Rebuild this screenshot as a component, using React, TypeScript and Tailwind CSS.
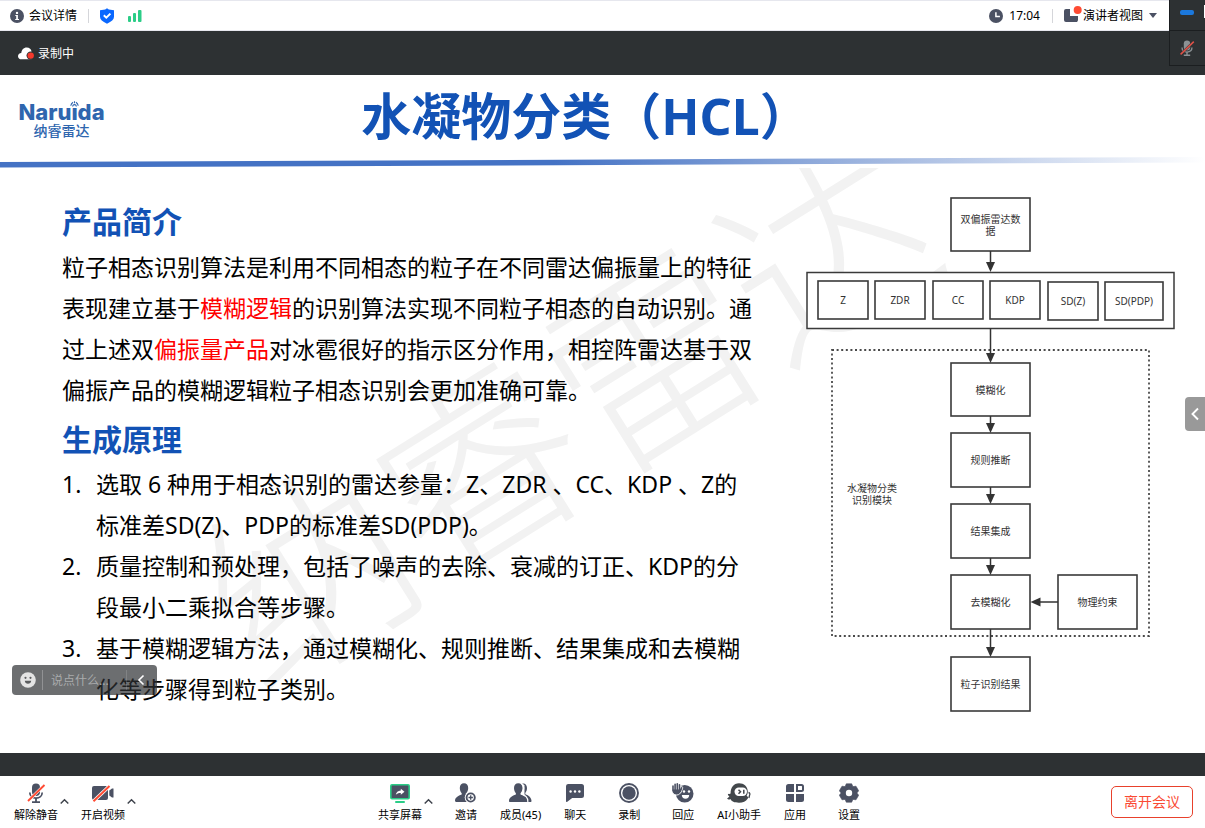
import type { ReactNode } from "react";

const INK = "#4b5163";
const RED = "#ff4b33";

function InfoIcon() {
  return (
    <svg width="14" height="14" viewBox="0 0 14 14" aria-hidden="true">
      <circle cx="7" cy="7" r="7" fill={INK} />
      <circle cx="7" cy="3.9" r="1.2" fill="#fff" />
      <path d="M5.3 5.9h2.6v4H9v1.2H5.2V9.9h1V7.1h-.9z" fill="#fff" />
    </svg>
  );
}

function ShieldIcon() {
  return (
    <svg width="14" height="16" viewBox="0 0 14 16" aria-hidden="true">
      <path d="M7 .3l1.800 1.200L14 2.200v6.600c0 2.800-2.400 4.900-7 6.900-4.600-2-7-4.100-7-6.900V2.200l5.200-.7z" fill="#0a68ff" />
      <path d="M3.800 7.300l2.500 2.400 4.100-4.100" fill="none" stroke="#fff" strokeWidth="2" />
    </svg>
  );
}

function SignalIcon() {
  return (
    <svg width="14" height="12" viewBox="0 0 14 12" fill="#2bcd87" aria-hidden="true">
      <rect x="0" y="6" width="3" height="6" rx="1" />
      <rect x="5" y="3" width="3" height="9" rx="1" />
      <rect x="10" y="0" width="3.500" height="12" rx="1" />
    </svg>
  );
}

function ClockIcon() {
  return (
    <svg width="14" height="14" viewBox="0 0 14 14" aria-hidden="true">
      <circle cx="7" cy="7" r="7" fill={INK} />
      <path d="M6.900 3.200v4.300h4" fill="none" stroke="#fff" strokeWidth="1.500" />
    </svg>
  );
}

function ViewIcon() {
  return (
    <svg width="18" height="17" viewBox="0 0 18 17" aria-hidden="true">
      <path d="M2 3h4v7h7v6H2a2 2 0 0 1-2-2V5a2 2 0 0 1 2-2z" fill={INK} />
      <path d="M6 10h8v4a2 2 0 0 1-2 2H6z" fill={INK} />
      <path d="M7.500 3v5.500H14" fill="none" stroke="#fff" strokeWidth="1.200" />
      <circle cx="13.700" cy="4" r="4" fill={RED} />
    </svg>
  );
}

function CloudIcon() {
  return (
    <svg width="16" height="13" viewBox="0 0 16 13" aria-hidden="true">
      <path d="M3.500 12.300C1.500 12.300 0 11.200 0 9.200c0-1.900 1.400-3.100 3.300-3.200C3.500 2.800 5.600.4 8.700.4c2.700 0 4.800 1.700 4.800 4.500v7.400z" fill="#fff" />
      <circle cx="12.700" cy="8.600" r="4.200" fill="#2d3133" />
      <circle cx="12.700" cy="8.600" r="3.200" fill="#f5392d" />
    </svg>
  );
}

function MicShape({ color, backing, slash }: { color: string; backing: string; slash: string }) {
  return (
    <>
      <rect x="6" y="0.500" width="8" height="12.500" rx="4" fill={color} />
      <path d="M3.800 9.500c0 3.500 2.700 5.600 6.200 5.600s6.200-2.100 6.200-5.600" fill="none" stroke={color} strokeWidth="1.700" />
      <path d="M10 15v4M6 19.100h8" stroke={color} strokeWidth="1.800" fill="none" />
      <path d="M2 18L18.500 2" stroke={backing} strokeWidth="3" />
      <path d="M2 18L18.500 2" stroke={slash} strokeWidth="1.900" />
    </>
  );
}

function MicOffIcon() {
  return (
    <svg width="20" height="20" viewBox="0 0 20 20" aria-hidden="true">
      <MicShape color={INK} backing="#fff" slash={RED} />
    </svg>
  );
}

function CameraOffIcon() {
  return (
    <svg width="22" height="20" viewBox="0 0 22 20" aria-hidden="true">
      <rect x="0" y="3" width="16" height="14" rx="2" fill={INK} />
      <path d="M17.300 7.500l2.700-2h1.500v9H20l-2.700-2z" fill={INK} />
      <path d="M1.500 18.200L17.500 3" stroke="#fff" strokeWidth="3.600" />
      <path d="M1.500 18.200L17.500 3" stroke={RED} strokeWidth="2" />
    </svg>
  );
}

function ShareIcon() {
  return (
    <svg width="20" height="20" viewBox="0 0 20 20" aria-hidden="true">
      <rect x="0.800" y="1.800" width="18.400" height="14" rx="1.200" fill={INK} stroke="#2bcd87" strokeWidth="1.600" />
      <rect x="5" y="18" width="10" height="2" rx="1" fill="#2bcd87" />
      <path d="M10.800 5.800l3.700 3-3.700 3v-1.900c-2.100-.1-3.600.4-5 1.900.3-2.600 2.100-4.200 5-4.400z" fill="#fff" />
    </svg>
  );
}

function InviteIcon() {
  return (
    <svg width="22" height="20" viewBox="0 0 22 20" aria-hidden="true">
      <path d="M9 .2c2.600 0 4.200 1.900 4.200 4.700 0 2.200-.8 4.200-2 5.300v1.300c1.300.6 2.300.9 3.200 1.500v6H1.200c-.7 0-1.200-.5-1.200-1.200 0-3.300 3.100-5 6.700-6.300v-1.300C5.600 9.100 4.800 7.100 4.800 4.900 4.800 2.100 6.400.2 9 .2z" fill={INK} />
      <circle cx="15.700" cy="14.500" r="6" fill="#fff" />
      <circle cx="15.700" cy="14.500" r="4.100" fill="none" stroke={INK} strokeWidth="1.900" />
      <path d="M15.700 12.300v4.400M13.500 14.500h4.400" stroke={INK} strokeWidth="1.300" />
    </svg>
  );
}

function MembersIcon() {
  return (
    <svg width="23" height="20" viewBox="0 0 23 20" aria-hidden="true">
      <path d="M13 .7c2.800-.9 5 1.100 5 4.400 0 2-.6 3.700-1.700 4.800v1.400c3.400 1.300 6.200 3.300 6.200 6.700 0 .6-.4 1-1 1h-6V2z" fill={INK} />
      <path d="M9.300.2c2.600 0 4.200 1.900 4.200 4.700 0 2.200-.8 4.200-2 5.300v1.300c3.600 1.200 6.500 3 6.500 6.500 0 .6-.4 1-1 1H1c-.6 0-1-.4-1-1 0-3.500 3.300-5.300 6.900-6.500v-1.300C5.800 9.100 5 7.100 5 4.900 5 2.100 6.700.2 9.300.2z" fill={INK} />
      <path d="M12.200.3c1.700 1 2.500 2.600 2.500 4.600 0 2.200-.8 4-1.900 5.300v.7c3.600 1.500 6 3.600 6 7.100v1.500" fill="none" stroke="#fff" strokeWidth="1.200" />
    </svg>
  );
}

function ChatIcon() {
  return (
    <svg width="20" height="20" viewBox="0 0 20 20" aria-hidden="true">
      <path d="M3 1h13.500A2.500 2.500 0 0 1 19 3.500v9a2.500 2.500 0 0 1-2.500 2.500H7.200L2.300 18.700C1.500 19.300 1 19 1 18V3.500A2.300 2.300 0 0 1 3 1z" fill={INK} />
      <circle cx="5.600" cy="8.500" r="1.200" fill="#fff" />
      <circle cx="10" cy="8.500" r="1.200" fill="#fff" />
      <circle cx="14.400" cy="8.500" r="1.200" fill="#fff" />
    </svg>
  );
}

function RecordIcon() {
  return (
    <svg width="20" height="20" viewBox="0 0 20 20" aria-hidden="true">
      <circle cx="10" cy="10" r="9" fill="none" stroke={INK} strokeWidth="1.900" />
      <circle cx="10" cy="10" r="6.700" fill={INK} />
    </svg>
  );
}

function ReactIcon() {
  return (
    <svg width="22" height="20" viewBox="0 0 22 20" aria-hidden="true">
      <circle cx="12.700" cy="10.800" r="8.800" fill={INK} />
      <path d="M1 8V3M3.100 6V1.300M5.300 6V.8M7.500 6V1.700M8.300 8.500l1.400-3.700" stroke="#fff" strokeWidth="3" strokeLinecap="round" />
      <path d="M.3 6h8.500v2.500c0 2-1.800 3.500-4.200 3.500S.3 10.500.3 8z" fill={INK} stroke="#fff" strokeWidth="0.900" />
      <path d="M1 8V3M3.100 7V1.300M5.300 7V.8M7.500 7V1.700M8.300 8.500l1.400-3.700" stroke={INK} strokeWidth="1.600" strokeLinecap="round" />
      <circle cx="12" cy="8.500" r="1.200" fill="#fff" />
      <circle cx="17" cy="8.500" r="1.200" fill="#fff" />
      <path d="M9.800 12h7.400c0 2.400-1.500 3.800-3.700 3.800S9.800 14.400 9.800 12z" fill="#fff" />
    </svg>
  );
}

function AssistantIcon() {
  return (
    <svg width="24" height="20" viewBox="0 0 24 20" fill="#42474b" aria-hidden="true">
      <path d="M12 .3c5 0 8.800 3.500 8.800 8.200 0 1.700-.4 3-1.200 4.300 1.500.6 2 2.300.8 3.200-1.200 2.300-4.500 3.700-8.400 3.700-4.600 0-7.600-1.300-8.300-3.400-1.500.4-3.300 0-3.600-1.100 1.200-.2 1.400-1 2.300-2C1 12.500.7 11.500 1 10.700c1 .4 2 .3 2.600-.1-.2-5.600 3-10.300 8.400-10.300z" />
      <rect x="7.500" y="4.500" width="12.500" height="8.500" rx="4.200" fill="#fff" />
      <path d="M11.500 6.800l2 2-2 2M16.800 6.800v4" fill="none" stroke="#42474b" strokeWidth="1.500" />
      <path d="M21.500 9.500c1.300.3 1.800 1.600 1 3l-.6 2.500" fill="none" stroke="#42474b" strokeWidth="1.300" />
    </svg>
  );
}

function AppsIcon() {
  return (
    <svg width="20" height="20" viewBox="0 0 20 20" fill={INK} aria-hidden="true">
      <path d="M3.500 1H9v8H1V3.500A2.500 2.500 0 0 1 3.500 1z" />
      <path d="M12 2h4.500A1.500 1.500 0 0 1 18 3.500v3A1.500 1.500 0 0 1 16.500 8H12z" fill="none" stroke={INK} strokeWidth="2" />
      <path d="M1 11h8v8H3.500A2.500 2.500 0 0 1 1 16.500z" />
      <path d="M11 11h8v5.500a2.500 2.500 0 0 1-2.500 2.500H11z" />
    </svg>
  );
}

function GearIcon() {
  return (
    <svg width="20" height="20" viewBox="0 0 20 20" aria-hidden="true">
      <path
        d="M7.300.8h5.400l1.200 2.800 3.100-.4 2.700 4.600L17.900 10l1.800 2.200-2.700 4.600-3.100-.4-1.200 2.800H7.300l-1.200-2.800-3.100.4-2.700-4.600L2.100 10 .3 7.800 3 3.200l3.100.4z"
        fill={INK}
        stroke={INK}
        strokeWidth="0.600"
        strokeLinejoin="round"
      />
      <circle cx="10" cy="10" r="3.200" fill="#fff" />
    </svg>
  );
}

function CaretUp({ label }: { label: string }) {
  return (
    <button type="button" aria-label={label} className="mt-[14px] ml-0.5 h-[9px] w-[9px]">
      <svg width="9" height="9" viewBox="0 0 9 9" aria-hidden="true">
        <path d="M.7 6.500l3.800-3.700 3.800 3.700" fill="none" stroke="#3f444d" strokeWidth="1.500" />
      </svg>
    </button>
  );
}

function Tool({ icon, label, wide }: { icon: ReactNode; label: string; wide?: boolean }) {
  return (
    <button type="button" className={`flex flex-col items-center ${wide ? "" : "min-w-10"}`}>
      <span className="flex h-5 items-center">{icon}</span>
      <span className="mt-1 text-[11px] leading-4 whitespace-nowrap text-black">{label}</span>
    </button>
  );
}

function TopBar() {
  return (
    <header className="flex h-[31px] items-center justify-between border-y border-[#e6e7ee] bg-white pr-12 pl-[10px] text-[12px] text-black">
      <div className="flex items-center">
        <button type="button" className="flex items-center gap-[5px]">
          <InfoIcon />
          会议详情
        </button>
        <span className="ml-[11px] h-[14px] w-px bg-[#d5d6da]" />
        <span className="ml-[11px]"><ShieldIcon /></span>
        <span className="ml-[14px]"><SignalIcon /></span>
      </div>
      <div className="flex items-center">
        <ClockIcon />
        <span className="ml-1.5">17:04</span>
        <span className="mr-[11px] ml-3 h-[14px] w-px bg-[#d5d6da]" />
        <button type="button" className="flex items-center">
          <span className="pb-[3px]"><ViewIcon /></span>
          <span className="ml-px">演讲者视图</span>
          <svg className="ml-1.5" width="8" height="5" viewBox="0 0 8 5" aria-hidden="true">
            <path d="M0 0h8L4 5z" fill={INK} />
          </svg>
        </button>
      </div>
    </header>
  );
}

function FloatingPanel() {
  return (
    <aside className="absolute top-0 right-0 flex w-9 flex-col border-b border-l border-[#1b1e20] bg-[#2d3133]">
      <button type="button" aria-label="收起" className="flex h-[31px] items-start justify-between border-b border-[#1b1e20] pt-[5px] pl-[10px]">
        <span className="mt-[5px] h-[5px] w-[14px] rounded-[2px] bg-[#1b78dd]" />
        <span className="h-[13px] w-px bg-white" />
      </button>
      <span className="flex h-[34px] items-center pl-[9px]">
        <svg width="16" height="16" viewBox="0 0 20 20" aria-hidden="true">
          <MicShape color="#8c9194" backing="#2d3133" slash="#e05248" />
        </svg>
      </span>
    </aside>
  );
}

function Logo() {
  return (
    <div className="relative mt-2 w-[87px] text-center text-[#2f66ae]">
      <div className="font-['Inter','Noto_Sans',sans-serif] text-[22px] leading-[22px] font-extrabold">Naruida</div>
      <svg className="absolute top-0 left-[52px]" width="9" height="6" viewBox="0 0 9 6" aria-hidden="true">
        <rect width="9" height="6" fill="#fff" />
        <path d="M.8 4.800C1 3 2 2 3 1.300M8.200 4.800C8 3 7 2 6 1.300M4.500.3v2" fill="none" stroke="#2f66ae" strokeWidth="1.100" />
        <path d="M2.600 5.500c.4-2.600 3.400-2.600 3.800 0" fill="none" stroke="#2f66ae" strokeWidth="1.200" />
      </svg>
      <div className="text-[14px] leading-4 font-medium">纳睿雷达</div>
    </div>
  );
}

type Box = { x: number; y: number; w: number; h: number; lines: string[] };

const BOXES: Box[] = [
  { x: 151, y: 6, w: 79, h: 53, lines: ["双偏振雷达数", "据"] },
  { x: 18, y: 89, w: 50, h: 38, lines: ["Z"] },
  { x: 75, y: 89, w: 50, h: 38, lines: ["ZDR"] },
  { x: 133, y: 89, w: 50, h: 38, lines: ["CC"] },
  { x: 190, y: 89, w: 50, h: 38, lines: ["KDP"] },
  { x: 248, y: 90, w: 50, h: 38, lines: ["SD(Z)"] },
  { x: 305, y: 90, w: 58, h: 38, lines: ["SD(PDP)"] },
  { x: 151, y: 171, w: 79, h: 53, lines: ["模糊化"] },
  { x: 151, y: 241, w: 79, h: 54, lines: ["规则推断"] },
  { x: 151, y: 312, w: 79, h: 54, lines: ["结果集成"] },
  { x: 151, y: 383, w: 79, h: 54, lines: ["去模糊化"] },
  { x: 258, y: 383, w: 79, h: 54, lines: ["物理约束"] },
  { x: 151, y: 465, w: 79, h: 54, lines: ["粒子识别结果"] },
];

const DOWN_ARROWS = [
  [59, 80],
  [136, 171],
  [224, 241],
  [295, 312],
  [366, 383],
  [437, 465],
];

function FlowChart() {
  return (
    <svg className="mt-6 shrink-0" width="380" height="522" viewBox="0 0 380 522" role="img" aria-label="水凝物分类流程图">
      <rect x="7" y="80.500" width="367" height="56" fill="#fff" stroke="#3a3a3a" strokeWidth="1.500" />
      <rect x="32" y="158" width="317" height="286" fill="none" stroke="#4a4a4a" strokeWidth="1.800" strokeDasharray="2 2.600" />
      {BOXES.map((b) => (
        <g key={b.lines[0]}>
          <rect x={b.x} y={b.y} width={b.w} height={b.h} fill="#fff" stroke="#3a3a3a" strokeWidth="1.600" />
          {b.lines.map((line, i) => (
            <text
              key={line}
              x={b.x + b.w / 2}
              y={b.y + b.h / 2 + 4 + (i * 12 - (b.lines.length - 1) * 6)}
              textAnchor="middle"
              fontSize="10"
              fill="#333"
            >
              {line}
            </text>
          ))}
        </g>
      ))}
      <text x="72" y="300" textAnchor="middle" fontSize="10" fill="#333">水凝物分类</text>
      <text x="72" y="312" textAnchor="middle" fontSize="10" fill="#333">识别模块</text>
      {DOWN_ARROWS.map(([from, to]) => (
        <g key={from}>
          <path d={`M190.500 ${from}V${to - 6}`} stroke="#333" strokeWidth="1.500" />
          <path d={`M186 ${to - 10}h9l-4.500 10z`} fill="#333" />
        </g>
      ))}
      <path d="M258 410h-20" stroke="#333" strokeWidth="1.500" />
      <path d="M240.500 405.500v9l-10-4.500z" fill="#333" />
    </svg>
  );
}

const STEPS = [
  "选取 6 种用于相态识别的雷达参量：Z、ZDR 、CC、KDP 、Z的标准差SD(Z)、PDP的标准差SD(PDP)。",
  "质量控制和预处理，包括了噪声的去除、衰减的订正、KDP的分段最小二乘拟合等步骤。",
  "基于模糊逻辑方法，通过模糊化、规则推断、结果集成和去模糊化等步骤得到粒子类别。",
];

function Slide() {
  return (
    <main className="relative flex-1 overflow-hidden bg-white">
      <div className="flex h-[82px] items-center pr-[139px] pl-[18px]">
        <Logo />
        <h1 className="flex-1 text-center text-[50px] leading-[82px] font-bold whitespace-nowrap text-[#1252b5]">水凝物分类（HCL）</h1>
      </div>
      <svg className="block h-[11px] w-full" viewBox="0 0 1205 11" preserveAspectRatio="none" aria-hidden="true">
        <defs>
          <linearGradient id="rule" x1="0" x2="1">
            <stop offset="0.460" stopColor="#4472c4" />
            <stop offset="0.750" stopColor="#a9bde2" />
            <stop offset="1" stopColor="#ffffff" />
          </linearGradient>
        </defs>
        <path d="M0 5L1205 0V5.500L0 10.500z" fill="url(#rule)" />
      </svg>
      <div className="relative flex justify-between overflow-hidden pr-[25px] pb-9 pl-[62px]">
        <div
          aria-hidden="true"
          className="pointer-events-none absolute top-[141px] left-[155px] -rotate-[32deg] text-[205px] leading-[205px] font-light whitespace-nowrap text-[#f2f2f2] select-none"
        >
          纳睿雷达
        </div>
        <section className="relative w-[695px] pt-[33px] text-[23px] leading-[41px] text-black">
          <h2 className="text-[30px] font-bold text-[#1252b5]">产品简介</h2>
          <p className="mt-[5px]">
            粒子相态识别算法是利用不同相态的粒子在不同雷达偏振量上的特征表现建立基于
            <span className="text-[#ff0000]">模糊逻辑</span>
            的识别算法实现不同粒子相态的自动识别。通过上述双
            <span className="text-[#ff0000]">偏振量产品</span>
            对冰雹很好的指示区分作用，相控阵雷达基于双偏振产品的模糊逻辑粒子相态识别会更加准确可靠。
          </p>
          <h2 className="mt-2 text-[30px] font-bold text-[#1252b5]">生成原理</h2>
          <ol className="mt-1">
            {STEPS.map((step, i) => (
              <li key={step} className="flex">
                <span className="w-[34px] shrink-0">{i + 1}.</span>
                <span>{step}</span>
              </li>
            ))}
          </ol>
        </section>
        <div className="relative shrink-0">
          <FlowChart />
        </div>
      </div>

      <button
        type="button"
        aria-label="展开侧栏"
        className="absolute top-[322px] right-0 flex h-[34px] w-5 items-center justify-center rounded-l-[4px] bg-[#999999]"
      >
        <svg width="8" height="14" viewBox="0 0 8 14" aria-hidden="true">
          <path d="M7 1.500L1.500 7 7 12.500" fill="none" stroke="#fff" strokeWidth="1.900" />
        </svg>
      </button>

      <div className="absolute bottom-[58px] left-3 flex h-[30px] w-[145px] items-center rounded-[4px] bg-[#2d3033]/70 pl-2">
        <svg className="shrink-0" width="16" height="16" viewBox="0 0 16 16" aria-hidden="true">
          <circle cx="8" cy="8" r="7.800" fill="#e4e4e4" />
          <circle cx="5.500" cy="5.800" r="1.100" fill="#5a5c5e" />
          <circle cx="10.500" cy="5.800" r="1.100" fill="#5a5c5e" />
          <path d="M4.800 8.800h6.400c0 4-6.400 4-6.400 0z" fill="#5a5c5e" />
        </svg>
        <span className="ml-1.5 h-5 w-px shrink-0 bg-white/25" />
        <input
          type="text"
          aria-label="聊天消息"
          placeholder="说点什么..."
          className="mt-0.5 ml-2 w-[75px] bg-transparent text-[12px] text-white outline-none placeholder:text-[#a9abac]"
        />
        <span className="h-5 w-px shrink-0 bg-white/15" />
        <button type="button" aria-label="收起聊天" className="ml-2.5">
          <svg width="8" height="12" viewBox="0 0 8 12" aria-hidden="true">
            <path d="M6.500 1.500L2 6l4.500 4.500" fill="none" stroke="#fff" strokeWidth="1.600" />
          </svg>
        </button>
      </div>
    </main>
  );
}

function Toolbar() {
  return (
    <footer className="flex h-[52px] items-start justify-between bg-white pt-[7px] pr-3 pl-[14px]">
      <div className="flex gap-3">
        <div className="flex items-start">
          <Tool wide icon={<MicOffIcon />} label="解除静音" />
          <CaretUp label="音频选项" />
        </div>
        <div className="flex items-start">
          <Tool wide icon={<CameraOffIcon />} label="开启视频" />
          <CaretUp label="视频选项" />
        </div>
      </div>
      <nav className="flex gap-[14px]">
        <div className="-mr-px flex items-start">
          <Tool wide icon={<ShareIcon />} label="共享屏幕" />
          <CaretUp label="共享选项" />
        </div>
        <Tool icon={<InviteIcon />} label="邀请" />
        <Tool icon={<MembersIcon />} label="成员(45)" />
        <Tool icon={<ChatIcon />} label="聊天" />
        <Tool icon={<RecordIcon />} label="录制" />
        <Tool icon={<ReactIcon />} label="回应" />
        <Tool icon={<AssistantIcon />} label="AI小助手" />
        <Tool icon={<AppsIcon />} label="应用" />
        <Tool icon={<GearIcon />} label="设置" />
      </nav>
      <button type="button" className="mt-[3px] h-8 rounded-[5px] border border-[#e8412c] px-3 text-[14px] leading-[30px] whitespace-nowrap text-[#fa4a33]">
        离开会议
      </button>
    </footer>
  );
}

export default function App() {
  return (
    <div lang="zh-CN" className="relative flex min-h-screen flex-col bg-[#2d3133] font-['Noto_Sans','Noto_Sans_CJK_SC',sans-serif]">
      <TopBar />
      <div className="flex h-11 items-center gap-1 pt-px pl-[18px] text-[12px] text-white">
        <CloudIcon />
        录制中
      </div>
      <Slide />
      <div className="h-[23px]" />
      <Toolbar />
      <FloatingPanel />
    </div>
  );
}
